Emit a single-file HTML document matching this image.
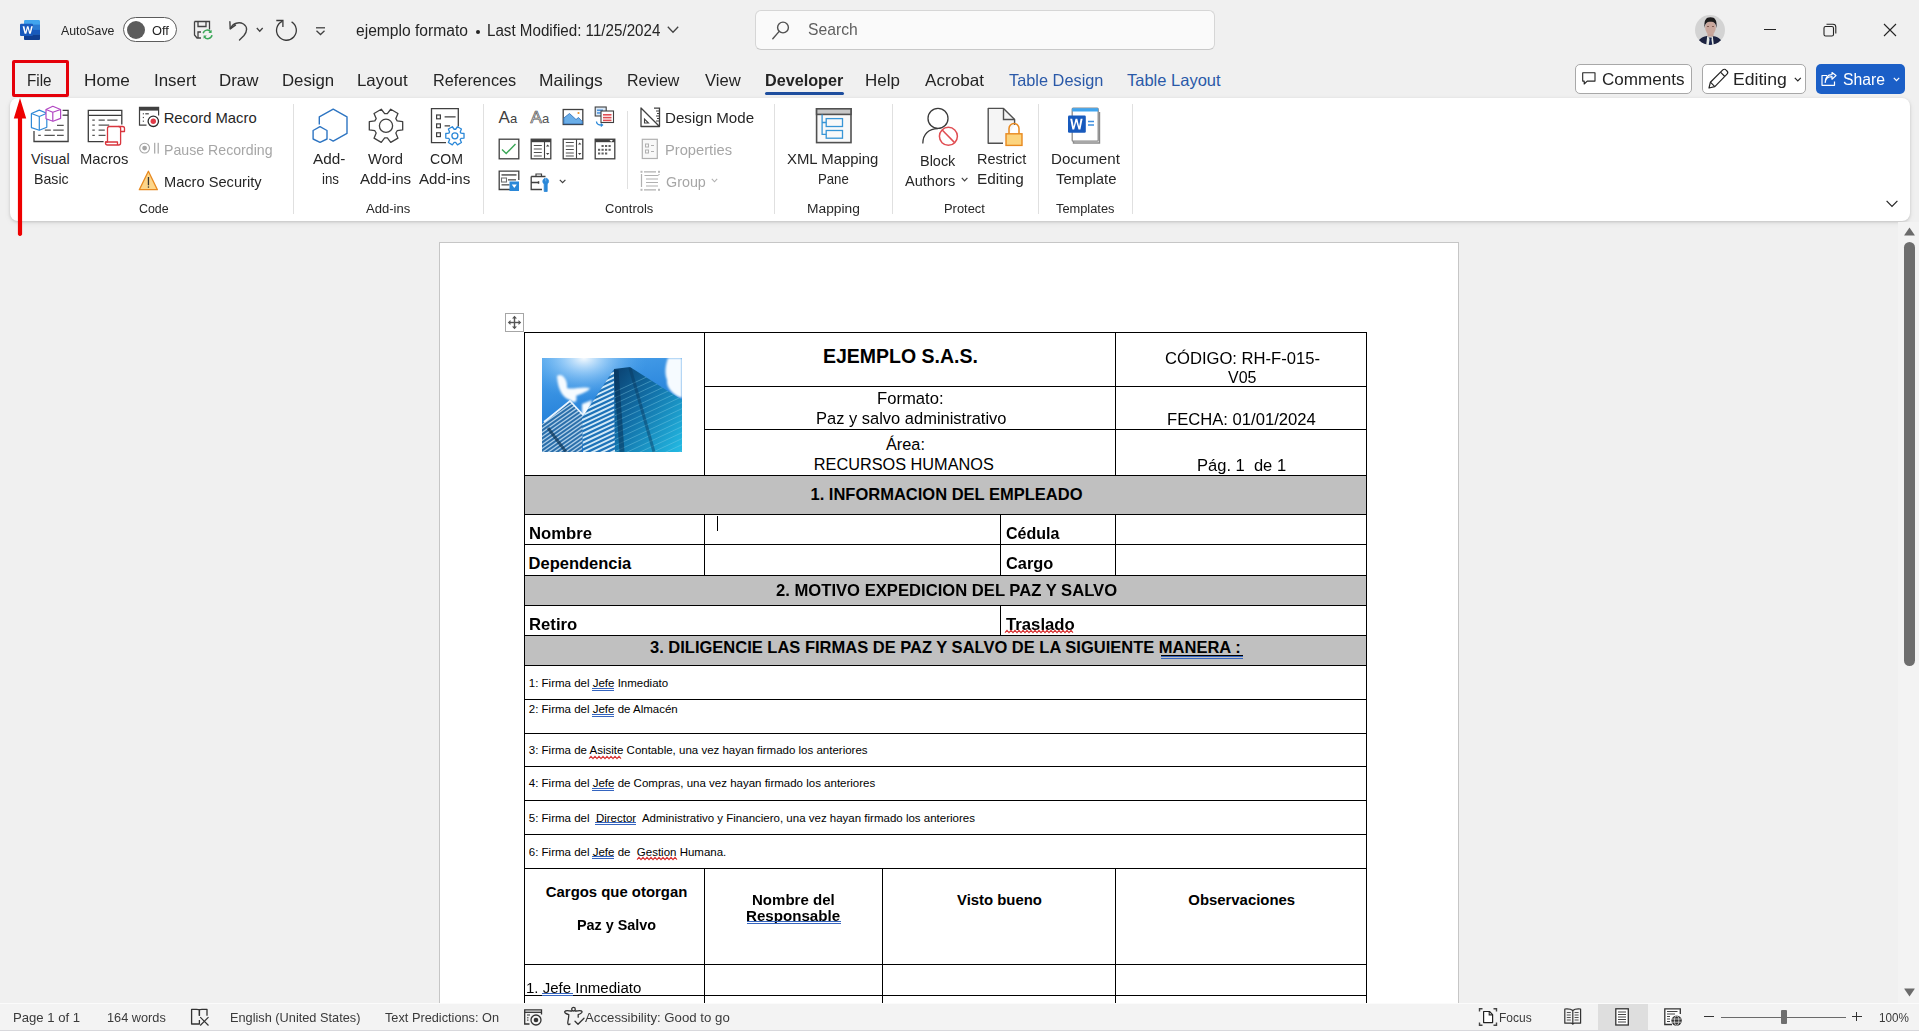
<!DOCTYPE html>
<html><head><meta charset="utf-8"><style>
html,body{margin:0;padding:0}
body{width:1919px;height:1031px;overflow:hidden;position:relative;background:#f0f0f0;font-family:"Liberation Sans",sans-serif}
.t{position:absolute;white-space:pre;line-height:1;transform-origin:0 0}
svg{overflow:visible}
</style></head><body>
<div style="position:absolute;left:10px;top:98px;width:1900px;height:123px;background:#fff;border-radius:8px;box-shadow:0 1px 3px rgba(0,0,0,0.16),0 2px 7px rgba(0,0,0,0.06)"></div>
<span class="t" style="left:61.00px;top:24.07px;font-size:13.5px;font-weight:400;color:#242424;transform:scaleX(0.9133);">AutoSave</span>
<div style="position:absolute;left:123px;top:17px;width:54px;height:25px;box-sizing:border-box;border:1px solid #5c5c5c;border-radius:13px;background:#fff"></div>
<div style="position:absolute;left:127px;top:21px;width:18px;height:18px;background:#5c5c5c;border-radius:50%"></div>
<span class="t" style="left:151.60px;top:23.82px;font-size:13.5px;font-weight:400;color:#242424;transform:scaleX(0.9524);">Off</span>
<span class="t" style="left:356.00px;top:22.75px;font-size:16px;font-weight:400;color:#242424;transform:scaleX(0.9754);">ejemplo formato</span>
<div style="position:absolute;left:476px;top:30px;width:4px;height:4px;background:#242424;border-radius:50%"></div>
<span class="t" style="left:486.55px;top:22.75px;font-size:16px;font-weight:400;color:#242424;transform:scaleX(0.9476);">Last Modified: 11/25/2024</span>
<div style="position:absolute;left:755px;top:10px;width:460px;height:40px;box-sizing:border-box;border:1px solid #d6d6d6;border-bottom-color:#c8c8c8;border-radius:6px;background:#fafafa"></div>
<span class="t" style="left:807.70px;top:20.71px;font-size:17px;font-weight:400;color:#5f5f5f;transform:scaleX(0.9231);">Search</span>
<span class="t" style="left:26.58px;top:72.33px;font-size:16.5px;font-weight:400;color:#242424;transform:scaleX(0.9248);">File</span>
<span class="t" style="left:83.66px;top:72.33px;font-size:16.5px;font-weight:400;color:#242424;transform:scaleX(1.0435);">Home</span>
<span class="t" style="left:153.58px;top:72.33px;font-size:16.5px;font-weight:400;color:#242424;transform:scaleX(1.0226);">Insert</span>
<span class="t" style="left:219.48px;top:72.33px;font-size:16.5px;font-weight:400;color:#242424;transform:scaleX(1.0243);">Draw</span>
<span class="t" style="left:281.98px;top:72.33px;font-size:16.5px;font-weight:400;color:#242424;transform:scaleX(1.0162);">Design</span>
<span class="t" style="left:356.98px;top:72.33px;font-size:16.5px;font-weight:400;color:#242424;transform:scaleX(1.0213);">Layout</span>
<span class="t" style="left:433.01px;top:72.33px;font-size:16.5px;font-weight:400;color:#242424;transform:scaleX(0.9864);">References</span>
<span class="t" style="left:538.95px;top:72.33px;font-size:16.5px;font-weight:400;color:#242424;transform:scaleX(1.0545);">Mailings</span>
<span class="t" style="left:627.33px;top:72.33px;font-size:16.5px;font-weight:400;color:#242424;transform:scaleX(0.9683);">Review</span>
<span class="t" style="left:705.00px;top:72.33px;font-size:16.5px;font-weight:400;color:#242424;transform:scaleX(1.0070);">View</span>
<span class="t" style="left:865.47px;top:72.33px;font-size:16.5px;font-weight:400;color:#242424;transform:scaleX(1.0288);">Help</span>
<span class="t" style="left:925.00px;top:72.33px;font-size:16.5px;font-weight:400;color:#242424;transform:scaleX(1.0370);">Acrobat</span>
<span class="t" style="left:764.52px;top:72.33px;font-size:16.5px;font-weight:700;color:#242424;transform:scaleX(0.9816);">Developer</span>
<div style="position:absolute;left:765px;top:92px;width:79px;height:3px;background:#1e4e9e;border-radius:2px"></div>
<span class="t" style="left:1008.75px;top:72.33px;font-size:16.5px;font-weight:400;color:#2a59a8;transform:scaleX(0.9899);">Table Design</span>
<span class="t" style="left:1127.00px;top:72.33px;font-size:16.5px;font-weight:400;color:#2a59a8;">Table Layout</span>
<div style="position:absolute;left:1575px;top:64px;width:117px;height:30px;box-sizing:border-box;border:1px solid #a8a8a8;border-radius:5px;background:#fff"></div>
<span class="t" style="left:1601.50px;top:71.95px;font-size:16px;font-weight:400;color:#242424;transform:scaleX(1.0666);">Comments</span>
<div style="position:absolute;left:1702px;top:64px;width:104px;height:30px;box-sizing:border-box;border:1px solid #a8a8a8;border-radius:5px;background:#fff"></div>
<span class="t" style="left:1732.50px;top:71.95px;font-size:16px;font-weight:400;color:#242424;transform:scaleX(1.1016);">Editing</span>
<div style="position:absolute;left:1816px;top:64px;width:89px;height:30px;background:#1b5fc7;border-radius:5px"></div>
<span class="t" style="left:1842.50px;top:71.95px;font-size:16px;font-weight:400;color:#fff;transform:scaleX(0.9837);">Share</span>
<span class="t" style="left:31.00px;top:151.79px;font-size:14.3px;font-weight:400;color:#262626;">Visual</span>
<span class="t" style="left:33.51px;top:172.19px;font-size:14.3px;font-weight:400;color:#262626;transform:scaleX(0.9908);">Basic</span>
<span class="t" style="left:80.47px;top:151.79px;font-size:14.3px;font-weight:400;color:#262626;transform:scaleX(1.0345);">Macros</span>
<span class="t" style="left:163.70px;top:110.67px;font-size:14.8px;font-weight:400;color:#262626;">Record Macro</span>
<span class="t" style="left:163.71px;top:143.09px;font-size:14.3px;font-weight:400;color:#a6a6a6;transform:scaleX(0.9896);">Pause Recording</span>
<span class="t" style="left:163.71px;top:174.67px;font-size:14.8px;font-weight:400;color:#262626;transform:scaleX(0.9881);">Macro Security</span>
<span class="t" style="left:138.70px;top:203.42px;font-size:12.5px;font-weight:400;color:#262626;transform:scaleX(0.9923);">Code</span>
<span class="t" style="left:313.40px;top:151.79px;font-size:14.3px;font-weight:400;color:#262626;transform:scaleX(1.0710);">Add-</span>
<span class="t" style="left:321.80px;top:172.19px;font-size:14.3px;font-weight:400;color:#262626;transform:scaleX(0.9323);">ins</span>
<span class="t" style="left:368.30px;top:151.79px;font-size:14.3px;font-weight:400;color:#262626;transform:scaleX(1.0310);">Word</span>
<span class="t" style="left:360.40px;top:172.19px;font-size:14.3px;font-weight:400;color:#262626;transform:scaleX(1.0553);">Add-ins</span>
<span class="t" style="left:429.50px;top:151.79px;font-size:14.3px;font-weight:400;color:#262626;transform:scaleX(0.9863);">COM</span>
<span class="t" style="left:419.30px;top:172.19px;font-size:14.3px;font-weight:400;color:#262626;transform:scaleX(1.0595);">Add-ins</span>
<span class="t" style="left:366.20px;top:203.42px;font-size:12.5px;font-weight:400;color:#262626;transform:scaleX(1.0443);">Add-ins</span>
<span class="t" style="left:664.78px;top:110.67px;font-size:14.8px;font-weight:400;color:#262626;transform:scaleX(1.0215);">Design Mode</span>
<span class="t" style="left:664.81px;top:142.67px;font-size:14.8px;font-weight:400;color:#a6a6a6;transform:scaleX(0.9933);">Properties</span>
<span class="t" style="left:665.80px;top:174.67px;font-size:14.8px;font-weight:400;color:#a6a6a6;transform:scaleX(0.9683);">Group</span>
<span class="t" style="left:604.50px;top:203.42px;font-size:12.5px;font-weight:400;color:#262626;transform:scaleX(1.0390);">Controls</span>
<span class="t" style="left:787.20px;top:151.79px;font-size:14.3px;font-weight:400;color:#262626;transform:scaleX(1.0424);">XML Mapping</span>
<span class="t" style="left:817.78px;top:172.19px;font-size:14.3px;font-weight:400;color:#262626;transform:scaleX(0.9217);">Pane</span>
<span class="t" style="left:806.50px;top:203.42px;font-size:12.5px;font-weight:400;color:#262626;transform:scaleX(1.1022);">Mapping</span>
<span class="t" style="left:919.79px;top:154.19px;font-size:14.3px;font-weight:400;color:#262626;transform:scaleX(1.0111);">Block</span>
<span class="t" style="left:905.40px;top:173.99px;font-size:14.3px;font-weight:400;color:#262626;transform:scaleX(1.0179);">Authors</span>
<span class="t" style="left:976.68px;top:151.79px;font-size:14.3px;font-weight:400;color:#262626;transform:scaleX(1.0151);">Restrict</span>
<span class="t" style="left:977.43px;top:172.19px;font-size:14.3px;font-weight:400;color:#262626;transform:scaleX(1.0710);">Editing</span>
<span class="t" style="left:944.37px;top:203.42px;font-size:12.5px;font-weight:400;color:#262626;transform:scaleX(1.0325);">Protect</span>
<span class="t" style="left:1050.84px;top:151.79px;font-size:14.3px;font-weight:400;color:#262626;transform:scaleX(1.0563);">Document</span>
<span class="t" style="left:1056.20px;top:172.19px;font-size:14.3px;font-weight:400;color:#262626;transform:scaleX(1.0420);">Template</span>
<span class="t" style="left:1056.20px;top:203.42px;font-size:12.5px;font-weight:400;color:#262626;transform:scaleX(1.0261);">Templates</span>
<div style="position:absolute;left:293px;top:104px;width:1px;height:110px;background:#e0e0e0"></div>
<div style="position:absolute;left:483px;top:104px;width:1px;height:110px;background:#e0e0e0"></div>
<div style="position:absolute;left:774px;top:104px;width:1px;height:110px;background:#e0e0e0"></div>
<div style="position:absolute;left:892px;top:104px;width:1px;height:110px;background:#e0e0e0"></div>
<div style="position:absolute;left:1038px;top:104px;width:1px;height:110px;background:#e0e0e0"></div>
<div style="position:absolute;left:1132px;top:104px;width:1px;height:110px;background:#e0e0e0"></div>
<div style="position:absolute;left:627px;top:111px;width:1px;height:78px;background:#e0e0e0"></div>
<div style="position:absolute;left:439px;top:242px;width:1020px;height:768px;box-sizing:border-box;border:1px solid #c6c6c6;border-bottom:none;background:#fff"></div>
<div style="position:absolute;left:1898px;top:222px;width:21px;height:781px;background:#f3f3f3"></div>
<div style="position:absolute;left:0px;top:1003px;width:1919px;height:28px;background:#f3f3f3;border-top:1px solid #fbfbfb;box-sizing:border-box"></div>
<div style="position:absolute;left:0px;top:1030px;width:1919px;height:1px;background:#d8d8dc"></div>
<span class="t" style="left:13.29px;top:1011.19px;font-size:13px;font-weight:400;color:#3a3a3a;transform:scaleX(1.0097);">Page 1 of 1</span>
<span class="t" style="left:107.00px;top:1011.19px;font-size:13px;font-weight:400;color:#3a3a3a;transform:scaleX(0.9805);">164 words</span>
<span class="t" style="left:230.32px;top:1011.19px;font-size:13px;font-weight:400;color:#3a3a3a;transform:scaleX(0.9808);">English (United States)</span>
<span class="t" style="left:384.90px;top:1011.19px;font-size:13px;font-weight:400;color:#3a3a3a;transform:scaleX(0.9802);">Text Predictions: On</span>
<span class="t" style="left:584.90px;top:1011.19px;font-size:13px;font-weight:400;color:#3a3a3a;transform:scaleX(1.0168);">Accessibility: Good to go</span>
<div style="position:absolute;left:1598px;top:1004px;width:50px;height:26px;background:#dedede"></div>
<span class="t" style="left:1499.08px;top:1011.19px;font-size:13px;font-weight:400;color:#3a3a3a;transform:scaleX(0.9226);">Focus</span>
<span class="t" style="left:1879.00px;top:1011.19px;font-size:13px;font-weight:400;color:#3a3a3a;transform:scaleX(0.8994);">100%</span>
<div style="position:absolute;left:524px;top:475px;width:843px;height:39px;background:#c0c0c0"></div>
<div style="position:absolute;left:524px;top:575px;width:843px;height:30px;background:#c0c0c0"></div>
<div style="position:absolute;left:524px;top:635px;width:843px;height:30px;background:#c0c0c0"></div>
<div style="position:absolute;left:524px;top:332px;width:843px;height:1px;background:#000"></div>
<div style="position:absolute;left:704px;top:386px;width:663px;height:1px;background:#000"></div>
<div style="position:absolute;left:704px;top:429px;width:663px;height:1px;background:#000"></div>
<div style="position:absolute;left:524px;top:475px;width:843px;height:1px;background:#000"></div>
<div style="position:absolute;left:524px;top:514px;width:843px;height:1px;background:#000"></div>
<div style="position:absolute;left:524px;top:544px;width:843px;height:1px;background:#000"></div>
<div style="position:absolute;left:524px;top:575px;width:843px;height:1px;background:#000"></div>
<div style="position:absolute;left:524px;top:605px;width:843px;height:1px;background:#000"></div>
<div style="position:absolute;left:524px;top:635px;width:843px;height:1px;background:#000"></div>
<div style="position:absolute;left:524px;top:665px;width:843px;height:1px;background:#000"></div>
<div style="position:absolute;left:524px;top:699px;width:843px;height:1px;background:#000"></div>
<div style="position:absolute;left:524px;top:733px;width:843px;height:1px;background:#000"></div>
<div style="position:absolute;left:524px;top:766px;width:843px;height:1px;background:#000"></div>
<div style="position:absolute;left:524px;top:800px;width:843px;height:1px;background:#000"></div>
<div style="position:absolute;left:524px;top:834px;width:843px;height:1px;background:#000"></div>
<div style="position:absolute;left:524px;top:868px;width:843px;height:1px;background:#000"></div>
<div style="position:absolute;left:524px;top:964px;width:843px;height:1px;background:#000"></div>
<div style="position:absolute;left:524px;top:995px;width:843px;height:1px;background:#000"></div>
<div style="position:absolute;left:524px;top:332px;width:1px;height:671px;background:#000"></div>
<div style="position:absolute;left:1366px;top:332px;width:1px;height:671px;background:#000"></div>
<div style="position:absolute;left:704px;top:332px;width:1px;height:143px;background:#000"></div>
<div style="position:absolute;left:1115px;top:332px;width:1px;height:143px;background:#000"></div>
<div style="position:absolute;left:704px;top:514px;width:1px;height:61px;background:#000"></div>
<div style="position:absolute;left:1000px;top:514px;width:1px;height:61px;background:#000"></div>
<div style="position:absolute;left:1115px;top:514px;width:1px;height:61px;background:#000"></div>
<div style="position:absolute;left:1000px;top:605px;width:1px;height:30px;background:#000"></div>
<div style="position:absolute;left:704px;top:868px;width:1px;height:135px;background:#000"></div>
<div style="position:absolute;left:882px;top:868px;width:1px;height:135px;background:#000"></div>
<div style="position:absolute;left:1115px;top:868px;width:1px;height:135px;background:#000"></div>
<div style="position:absolute;left:505px;top:313px;width:19px;height:19px;box-sizing:border-box;border:1px solid #a6a6a6;background:#fff"></div>
<svg style="position:absolute;left:507px;top:315px;" width="15" height="15" viewBox="0 0 15 15"><g fill="#555"><rect x="6.8" y="2.5" width="1.4" height="10"/><rect x="2.5" y="6.8" width="10" height="1.4"/><path d="M7.5 0.8 L10 3.5 L5 3.5Z M7.5 14.2 L10 11.5 L5 11.5Z M0.8 7.5 L3.5 5 L3.5 10Z M14.2 7.5 L11.5 5 L11.5 10Z"/></g></svg>
<span class="t" style="left:822.90px;top:346.79px;font-size:19.5px;font-weight:700;color:#000;">EJEMPLO S.A.S.</span>
<span class="t" style="left:877.48px;top:390.30px;font-size:16.3px;font-weight:400;color:#000;transform:scaleX(1.0217);">Formato:</span>
<span class="t" style="left:815.59px;top:410.30px;font-size:16.3px;font-weight:400;color:#000;transform:scaleX(1.0120);">Paz y salvo administrativo</span>
<span class="t" style="left:886.00px;top:436.30px;font-size:16.3px;font-weight:400;color:#000;">Área:</span>
<span class="t" style="left:813.80px;top:456.00px;font-size:16.3px;font-weight:400;color:#000;">RECURSOS HUMANOS</span>
<span class="t" style="left:1165.40px;top:350.10px;font-size:16.3px;font-weight:400;color:#000;transform:scaleX(1.0201);">CÓDIGO: RH-F-015-</span>
<span class="t" style="left:1227.80px;top:368.50px;font-size:16.3px;font-weight:400;color:#000;transform:scaleX(0.9822);">V05</span>
<span class="t" style="left:1167.18px;top:410.50px;font-size:16.3px;font-weight:400;color:#000;transform:scaleX(1.0210);">FECHA: 01/01/2024</span>
<span class="t" style="left:1196.99px;top:456.60px;font-size:16.3px;font-weight:400;color:#000;transform:scaleX(1.0144);">Pág. 1  de 1</span>
<span class="t" style="left:810.50px;top:486.33px;font-size:16.5px;font-weight:700;color:#000;">1. INFORMACION DEL EMPLEADO</span>
<span class="t" style="left:528.59px;top:525.13px;font-size:16.5px;font-weight:700;color:#000;transform:scaleX(1.0120);">Nombre</span>
<span class="t" style="left:1005.60px;top:525.23px;font-size:16.5px;font-weight:700;color:#000;transform:scaleX(0.9725);">Cédula</span>
<span class="t" style="left:528.60px;top:555.13px;font-size:16.5px;font-weight:700;color:#000;">Dependencia</span>
<span class="t" style="left:1005.60px;top:554.53px;font-size:16.5px;font-weight:700;color:#000;transform:scaleX(0.9918);">Cargo</span>
<span class="t" style="left:775.80px;top:582.33px;font-size:16.5px;font-weight:700;color:#000;transform:scaleX(1.0074);">2. MOTIVO EXPEDICION DEL PAZ Y SALVO</span>
<span class="t" style="left:528.59px;top:616.33px;font-size:16.5px;font-weight:700;color:#000;transform:scaleX(1.0130);">Retiro</span>
<span class="t" style="left:1005.60px;top:615.83px;font-size:16.5px;font-weight:700;color:#000;transform:scaleX(1.0135);">Traslado</span>
<span class="t" style="left:650.00px;top:639.43px;font-size:16.5px;font-weight:700;color:#000;">3. DILIGENCIE LAS FIRMAS DE PAZ Y SALVO DE LA SIGUIENTE MANERA :</span>
<div style="position:absolute;left:717px;top:516px;width:1px;height:15px;background:#000"></div>
<span class="t" style="left:528.80px;top:677.96px;font-size:11.5px;font-weight:400;color:#000;">1: Firma del Jefe Inmediato</span>
<span class="t" style="left:528.80px;top:703.96px;font-size:11.5px;font-weight:400;color:#000;">2: Firma del Jefe de Almacén</span>
<span class="t" style="left:528.80px;top:745.36px;font-size:11.5px;font-weight:400;color:#000;">3: Firma de Asisite Contable, una vez hayan firmado los anteriores</span>
<span class="t" style="left:528.80px;top:778.36px;font-size:11.5px;font-weight:400;color:#000;">4: Firma del Jefe de Compras, una vez hayan firmado los anteriores</span>
<span class="t" style="left:528.80px;top:812.56px;font-size:11.5px;font-weight:400;color:#000;">5: Firma del  Director  Administrativo y Financiero, una vez hayan firmado los anteriores</span>
<span class="t" style="left:528.80px;top:846.56px;font-size:11.5px;font-weight:400;color:#000;">6: Firma del Jefe de  Gestion Humana.</span>
<span class="t" style="left:545.80px;top:884.78px;font-size:14.9px;font-weight:700;color:#000;">Cargos que otorgan</span>
<span class="t" style="left:576.73px;top:917.78px;font-size:14.9px;font-weight:700;color:#000;transform:scaleX(0.9660);">Paz y Salvo</span>
<span class="t" style="left:752.09px;top:892.58px;font-size:14.9px;font-weight:700;color:#000;transform:scaleX(1.0102);">Nombre del</span>
<span class="t" style="left:746.48px;top:908.68px;font-size:14.9px;font-weight:700;color:#000;transform:scaleX(1.0153);">Responsable</span>
<span class="t" style="left:957.00px;top:892.88px;font-size:14.9px;font-weight:700;color:#000;">Visto bueno</span>
<span class="t" style="left:1188.30px;top:892.88px;font-size:14.9px;font-weight:700;color:#000;">Observaciones</span>
<span class="t" style="left:525.79px;top:980.53px;font-size:14.85px;font-weight:400;color:#000;transform:scaleX(1.0123);">1. Jefe Inmediato</span>
<svg style="position:absolute;left:20px;top:20px;" width="20" height="20" viewBox="0 0 20 20"><rect x="4" y="0" width="16" height="20" rx="1.2" fill="#41a5ee"/><rect x="4" y="4.6" width="16" height="5" fill="#2b7cd3"/><rect x="4" y="9.6" width="16" height="5" fill="#185abd"/><path d="M4 14.6h16v4.2a1.2 1.2 0 0 1-1.2 1.2H5.2A1.2 1.2 0 0 1 4 18.8z" fill="#103f91"/><rect x="0" y="3.7" width="13" height="12.2" rx="1" fill="#185abd"/><path d="M2.6 6.2h1.8l1.2 5.6 1.4-5.6h1.5l1.4 5.6 1.2-5.6h1.7l-2 7.6H9.2L7.75 8.3 6.3 13.8H4.6z" fill="#fff"/></svg>
<svg style="position:absolute;left:193px;top:20px;" width="21" height="20" viewBox="0 0 21 20"><g fill="none" stroke="#424242" stroke-width="1.3"><path d="M1.5 1.5h15v8M1.5 1.5v13.5l2.5 3h4"/><path d="M5 1.5v5h8v-5M5 18v-6h3"/></g><g fill="none" stroke="#3aa757" stroke-width="1.5"><path d="M10.2 13.2a4.2 4.2 0 0 1 7.6-1.2"/><path d="M19 15.2a4.2 4.2 0 0 1-7.6 1.6"/></g><path d="M18.6 9.8v3.2h-3.2z M10.6 18.8v-3.2h3.2z" fill="#3aa757"/></svg>
<svg style="position:absolute;left:229px;top:20px;" width="20" height="21" viewBox="0 0 20 21"><g fill="none" stroke="#424242" stroke-width="1.4" stroke-linecap="round"><path d="M1.2 8.8 L6.5 5.2 M1.2 8.8 L0.9 1.8"/><path d="M1.5 8.6 C4 3 10 1.5 14.5 4 C19 7 18 12 15 15.5 L10.5 20"/></g></svg>
<svg style="position:absolute;left:256px;top:27px;" width="8" height="6" viewBox="0 0 8 6"><path d="M0.8 1 L3.75 4.2 L6.7 1" fill="none" stroke="#424242" stroke-width="1.3"/></svg>
<svg style="position:absolute;left:272px;top:16px;" width="28" height="28" viewBox="0 0 28 28"><g fill="none" stroke="#383838" stroke-width="1.3"><path d="M19.6 5.9 A9.9 9.9 0 1 1 10.2 5.4"/><path d="M4.3 4.5 H10.9 V11.1"/></g></svg>
<svg style="position:absolute;left:315px;top:27px;" width="11" height="9" viewBox="0 0 11 9"><g fill="none" stroke="#424242" stroke-width="1.3"><path d="M1 0.8h9"/><path d="M1.5 3.8 L5.5 7.5 L9.5 3.8"/></g></svg>
<svg style="position:absolute;left:667px;top:26px;" width="12" height="8" viewBox="0 0 12 8"><path d="M0.8 0.8 L6 6.2 L11.2 0.8" fill="none" stroke="#424242" stroke-width="1.3"/></svg>
<svg style="position:absolute;left:772px;top:21px;" width="18" height="19" viewBox="0 0 18 19"><g fill="none" stroke="#505050" stroke-width="1.4"><circle cx="11" cy="6.5" r="5.4"/><path d="M7.2 10.4 L0.8 17.8" stroke-linecap="round"/></g></svg>
<svg style="position:absolute;left:1695px;top:15px;" width="30" height="30" viewBox="0 0 30 30"><defs><clipPath id="av"><circle cx="15" cy="15" r="15"/></clipPath><filter id="avb"><feGaussianBlur stdDeviation="0.5"/></filter></defs><g clip-path="url(#av)"><rect width="30" height="30" fill="#d3d3d3"/><g filter="url(#avb)"><path d="M2.5 30 C3 25 5 22.5 12 21 L15 23 L18 21 C25 22.5 27 25 27.5 30Z" fill="#1a2140"/><path d="M12.2 21 L15 23.5 L17.8 21 L18.8 30 L11.2 30Z" fill="#e4e8e4"/><path d="M14.2 22.8h2.6l-0.3 2 0.8 5.2h-3.6l0.8-5.2z" fill="#1d2850"/><rect x="12.5" y="17.5" width="6" height="4" fill="#c4a095"/><ellipse cx="15.5" cy="12.8" rx="5.3" ry="7" fill="#c9a79c"/><path d="M9.6 13 C8.8 5 11 2.2 15.5 2.2 C20 2.2 22.2 5 21.5 13 C20.8 8.5 19.5 6.8 15.5 6.8 C11.5 6.8 10.2 8.5 9.6 13Z" fill="#1c1a1c"/><rect x="12" y="11.2" width="2" height="0.8" fill="#6e4a40"/><rect x="17" y="11.2" width="2" height="0.8" fill="#6e4a40"/></g></g></svg>
<div style="position:absolute;left:1764px;top:29px;width:12px;height:1px;background:#242424"></div>
<svg style="position:absolute;left:1823px;top:23px;" width="14" height="14" viewBox="0 0 14 14"><g fill="none" stroke="#242424" stroke-width="1.1"><rect x="1" y="3.5" width="9.5" height="9.5" rx="1.6"/><path d="M3.5 1.2h6.5a2.8 2.8 0 0 1 2.8 2.8v6.5"/></g></svg>
<svg style="position:absolute;left:1883px;top:23px;" width="14" height="14" viewBox="0 0 14 14"><path d="M1 1 L13 13 M13 1 L1 13" stroke="#242424" stroke-width="1.1"/></svg>
<svg style="position:absolute;left:1582px;top:72px;" width="14" height="13" viewBox="0 0 14 13"><path d="M0.7 0.7h12.3v8.4H5.2L2.2 12V9.1H0.7z" fill="none" stroke="#242424" stroke-width="1.1" stroke-linejoin="round"/></svg>
<svg style="position:absolute;left:1708px;top:69px;" width="21" height="20" viewBox="0 0 21 20"><g fill="none" stroke="#242424" stroke-width="1.2" stroke-linejoin="round"><path d="M1 19 L2.4 13.2 L14.8 0.9 a2.2 2.2 0 0 1 3.3 0.2 l0.9 0.9 a2.2 2.2 0 0 1 0 3.1 L6.8 17.6 Z"/><path d="M12.5 3.2 L16.8 7.5 M2.4 13.2 L6.8 17.6"/></g></svg>
<svg style="position:absolute;left:1794px;top:77px;" width="8" height="5" viewBox="0 0 8 5"><path d="M0.8 0.8 L3.8 3.8 L6.8 0.8" fill="none" stroke="#242424" stroke-width="1.2"/></svg>
<svg style="position:absolute;left:1821px;top:72px;" width="16" height="14" viewBox="0 0 16 14"><g fill="none" stroke="#fff" stroke-width="1.2" stroke-linejoin="round"><path d="M6 3.5H1v9.8h12.5V9.5"/><path d="M4.2 10.5 C4.5 6.5 7.5 4.6 11 4.6 V7.2 L15 3.6 L11 0.6 V2.6 C6.5 2.6 4 6 4.2 10.5Z"/></g></svg>
<svg style="position:absolute;left:1893px;top:77px;" width="8" height="5" viewBox="0 0 8 5"><path d="M0.8 0.8 L3.5 3.6 L6.2 0.8" fill="none" stroke="#fff" stroke-width="1.2"/></svg>
<svg style="position:absolute;left:1886px;top:200px;" width="12" height="8" viewBox="0 0 12 8"><path d="M0.6 0.8 L6 6.4 L11.4 0.8" fill="none" stroke="#242424" stroke-width="1.2"/></svg>
<div style="position:absolute;left:12px;top:60px;width:57px;height:37px;box-sizing:border-box;border:3.5px solid #e5000a;border-radius:2px"></div>
<svg style="position:absolute;left:13px;top:98px;" width="14" height="140" viewBox="0 0 14 140"><path d="M7 0 L13.2 20.5 L9.1 20.5 L9.1 136.5 Q7 139.5 4.9 136.5 L4.9 20.5 L0.8 20.5 Z" fill="#ee0000"/></svg>
<svg style="position:absolute;left:1904px;top:227px;" width="11" height="9" viewBox="0 0 11 9"><path d="M5.5 0.5 L10.8 8.2 Q10.8 8.6 10.3 8.6 H0.7 Q0.2 8.6 0.2 8.2Z" fill="#6b6b6b"/></svg>
<div style="position:absolute;left:1904px;top:242px;width:11px;height:424px;background:#6e6e6e;border-radius:6px"></div>
<svg style="position:absolute;left:1904px;top:988px;" width="11" height="9" viewBox="0 0 11 9"><path d="M5.5 8.5 L10.8 0.8 Q10.8 0.4 10.3 0.4 H0.7 Q0.2 0.4 0.2 0.8Z" fill="#6b6b6b"/></svg>
<svg style="position:absolute;left:28px;top:102px;" width="44" height="44" viewBox="0 0 44 44"><g fill="none" stroke="#404040" stroke-width="1.3"><path d="M34.6 8.3H40.1V39.5H6V29"/><path d="M34.6 13.2H40"/></g><g stroke="#555" stroke-width="1.2"><path d="M29 23.3h6.7M16.8 28.2h6M25.2 28.2h10.5M10.2 33.3h2.6M16.4 33.3h10.4M29 33.3h6.7"/></g><g fill="#fff" stroke="#2f8ad8" stroke-width="1.2" stroke-linejoin="round"><path d="M11.3 8.1L18.8 11.3V25.2L11.3 28.2L3.4 25.6V11.5Z"/><path d="M3.4 11.5L11.3 14.5L18.8 11.3M11.3 14.5V28.2" fill="none"/></g><g fill="#fff" stroke="#b146c2" stroke-width="1.2" stroke-linejoin="round"><path d="M24.8 4.3L32.6 7.5V16.4L25 19.2L18 16.8V7.5Z"/><path d="M18 7.5L24.8 10.2L32.6 7.5M24.8 10.2V19.2" fill="none"/></g></svg>
<svg style="position:absolute;left:84px;top:104px;" width="44" height="44" viewBox="0 0 44 44"><g fill="none" stroke="#3c3c3c" stroke-width="1.3"><path d="M19.6 37.6H4.3V6.4H37.8V20.5"/><path d="M4.3 11.3H37.8"/></g><g stroke="#555" stroke-width="1.2"><path d="M8.3 16.2h2.5M14.6 16.2h6.2M23.3 16.2h10.2M8.3 21.2h2.5M14.6 21.2h10.6M8.3 26.2h2.5M14.6 26.2h6.2M8.3 31.4h2.5M14.6 31.4h6.9"/></g><g fill="#fff" stroke="#d9363e" stroke-width="1.3" stroke-linejoin="round"><path d="M23.5 38V24.5a2 2 0 0 1 2-2H38.5a2 2 0 0 1 2 2v3H36.6V39a2 2 0 0 1-2 2H23.5a2 2 0 0 1-2-2V38Z"/><path d="M36.6 27.5V24.5a2 2 0 0 0-2-2M21.5 38H33.5V41" fill="none"/></g></svg>
<svg style="position:absolute;left:136px;top:104px;" width="26" height="26" viewBox="0 0 26 26"><g fill="none" stroke="#404040" stroke-width="1.2"><path d="M10.5 21.2H3.5V3.4H22.6V11.4"/></g><rect x="3.5" y="3.4" width="19.1" height="3.2" fill="#404040"/><g fill="#404040"><rect x="6.8" y="9.2" width="1.1" height="1.2"/><rect x="9.3" y="9.2" width="3.5" height="1.2"/><rect x="6.8" y="12.9" width="1.1" height="1.2"/><rect x="6.8" y="16.6" width="1.1" height="1.2"/></g><circle cx="17.3" cy="17.3" r="5.2" fill="#fff" stroke="#2a2a2a" stroke-width="1.3"/><circle cx="17.3" cy="17.3" r="2.7" fill="#e03a47"/></svg>
<svg style="position:absolute;left:136px;top:140px;" width="26" height="18" viewBox="0 0 26 18"><circle cx="8.6" cy="8.1" r="4.9" fill="none" stroke="#a6a6a6" stroke-width="1.1"/><circle cx="8.6" cy="8.1" r="2.4" fill="#a6a6a6"/><rect x="18.1" y="2.8" width="1.2" height="10.8" fill="#a6a6a6"/><rect x="21.6" y="2.8" width="1.2" height="10.8" fill="#a6a6a6"/></svg>
<svg style="position:absolute;left:136px;top:170px;" width="26" height="22" viewBox="0 0 26 22"><path d="M12.4 1.3L21.4 19.7H3.3Z" fill="#fdd68a" stroke="#e8891f" stroke-width="1.3" stroke-linejoin="round"/><rect x="11.8" y="7" width="1.3" height="8.3" fill="#333"/><rect x="11.8" y="16.4" width="1.3" height="1.3" fill="#333"/></svg>
<svg style="position:absolute;left:308px;top:104px;" width="44" height="44" viewBox="0 0 44 44"><g fill="none" stroke="#2e75c2" stroke-width="1.4" stroke-linejoin="round"><path d="M11.3 20.5V12.8L25.2 5.1L39 12.8V29.4L25.2 37.1L21.3 35"/><path d="M12 22.6L19 26.5V35L12 38.4L5.1 35V26.5Z"/></g></svg>
<svg style="position:absolute;left:366px;top:107px;" width="40" height="40" viewBox="0 0 40 40"><path d="M31.17 13.88 L36.69 14.63 L36.69 22.97 L31.17 23.72 L29.84 26.01 L31.96 31.16 L24.73 35.34 L21.33 30.93 L18.67 30.93 L15.27 35.34 L8.04 31.16 L10.16 26.01 L8.83 23.72 L3.31 22.97 L3.31 14.63 L8.83 13.88 L10.16 11.59 L8.04 6.44 L15.27 2.26 L18.67 6.67 L21.33 6.67 L24.73 2.26 L31.96 6.44 L29.84 11.59Z" fill="#fff" stroke="#404040" stroke-width="1.3" stroke-linejoin="round"/><circle cx="20" cy="18.8" r="6.6" fill="none" stroke="#404040" stroke-width="1.3"/></svg>
<svg style="position:absolute;left:430px;top:107px;" width="38" height="40" viewBox="0 0 38 40"><g fill="none" stroke="#404040" stroke-width="1.3"><path d="M16 35.6H1.5V1.6H28.3V19.5"/></g><g fill="none" stroke="#404040" stroke-width="1.2"><rect x="6.6" y="8" width="3.8" height="3.8"/><rect x="6.6" y="16.9" width="3.8" height="3.8"/><rect x="6.6" y="25.8" width="3.8" height="3.8"/></g><g stroke="#404040" stroke-width="1.2"><path d="M14.6 9.9h11M14.6 18.8h5.5"/></g><path d="M30.94 26.14 L34.02 26.52 L34.02 31.08 L30.94 31.46 L30.22 32.70 L31.43 35.56 L27.48 37.84 L25.62 35.36 L24.18 35.36 L22.32 37.84 L18.37 35.56 L19.58 32.70 L18.86 31.46 L15.78 31.08 L15.78 26.52 L18.86 26.14 L19.58 24.90 L18.37 22.04 L22.32 19.76 L24.18 22.24 L25.62 22.24 L27.48 19.76 L31.43 22.04 L30.22 24.90Z" fill="#fff" stroke="#2b88d8" stroke-width="1.3" stroke-linejoin="round"/><circle cx="24.9" cy="28.8" r="3.0" fill="none" stroke="#2b88d8" stroke-width="1.3"/></svg>
<svg style="position:absolute;left:498px;top:109px;" width="22" height="16" viewBox="0 0 22 16"><text x="0.5" y="14" font-family="Liberation Sans" font-size="17" fill="#404040">A</text><text x="12" y="14" font-family="Liberation Sans" font-size="13" fill="#404040">a</text></svg>
<svg style="position:absolute;left:530px;top:109px;" width="22" height="16" viewBox="0 0 22 16"><text x="0.5" y="14" font-family="Liberation Sans" font-size="17" fill="#fff" stroke="#505050" stroke-width="0.7">A</text><text x="12" y="14" font-family="Liberation Sans" font-size="13" fill="#505050">a</text></svg>
<svg style="position:absolute;left:562px;top:108px;" width="22" height="18" viewBox="0 0 22 18"><rect x="1.2" y="1.5" width="19.6" height="15" fill="#fff" stroke="#404040" stroke-width="1.3"/><path d="M1.8 15.8V10L7.5 5.5L14 11.5L16.5 9.5L20.3 13.5V15.8Z" fill="#6aaee8" stroke="#2b6cb8" stroke-width="0.8"/><circle cx="16.5" cy="5" r="1.1" fill="#e8912d"/></svg>
<svg style="position:absolute;left:594px;top:106px;" width="22" height="22" viewBox="0 0 22 22"><rect x="1.2" y="1" width="11" height="9" fill="#dbe9f7" stroke="#404040" stroke-width="1.1"/><rect x="3" y="3.5" width="6" height="1.5" fill="#4a90d9"/><rect x="3" y="6.2" width="4" height="1.5" fill="#4a90d9"/><rect x="7" y="5" width="12.5" height="11.5" fill="#fff" stroke="#404040" stroke-width="1.1"/><rect x="9" y="8" width="8.5" height="1.6" fill="#e04d52"/><rect x="9" y="10.8" width="8.5" height="1.6" fill="#e04d52"/><rect x="9" y="13.6" width="8.5" height="1.6" fill="#e04d52"/><path d="M2.5 15.5C2.5 18 4 19 7.5 19" fill="none" stroke="#2b88d8" stroke-width="1.3"/><path d="M6.8 16.8L9.5 19L6.8 21.2Z" fill="#2b88d8"/></svg>
<svg style="position:absolute;left:498px;top:138px;" width="22" height="22" viewBox="0 0 22 22"><rect x="1.2" y="1.2" width="19.6" height="19.6" fill="#fff" stroke="#404040" stroke-width="1.3"/><path d="M4 11.5L8.2 15.5L17.5 6" fill="none" stroke="#3aa757" stroke-width="1.4"/></svg>
<svg style="position:absolute;left:530px;top:138px;" width="22" height="22" viewBox="0 0 22 22"><rect x="1.2" y="1.2" width="19.6" height="19.6" fill="#fff" stroke="#404040" stroke-width="1.3"/><rect x="1.2" y="1.2" width="19.6" height="3" fill="#404040"/><path d="M14.5 1.5V20.5" stroke="#404040" stroke-width="1.1"/><g stroke="#505050" stroke-width="1.2"><path d="M3.8 7.5h8M3.8 11h8M3.8 14.5h8M3.8 18h8"/></g><path d="M16 8.5L17.7 6.5L19.4 8.5ZM16 15L17.7 17L19.4 15Z" fill="#404040"/></svg>
<svg style="position:absolute;left:562px;top:138px;" width="22" height="22" viewBox="0 0 22 22"><rect x="1.2" y="1.2" width="19.6" height="19.6" fill="#fff" stroke="#404040" stroke-width="1.3"/><path d="M14.5 1.5V20.5" stroke="#404040" stroke-width="1.1"/><g stroke="#505050" stroke-width="1.2"><path d="M3.8 4.5h8M3.8 8h8M3.8 11.5h8M3.8 15h8M3.8 18h8"/></g><path d="M16 6.5L17.7 4.5L19.4 6.5ZM16 15L17.7 17L19.4 15Z" fill="#404040"/></svg>
<svg style="position:absolute;left:594px;top:138px;" width="22" height="22" viewBox="0 0 22 22"><rect x="1.2" y="1.2" width="19.6" height="19.6" fill="#fff" stroke="#404040" stroke-width="1.3"/><rect x="1.2" y="1.2" width="19.6" height="3" fill="#404040"/><g fill="#606060"><rect x="7.5" y="7" width="2.2" height="2"/><rect x="11" y="7" width="2.2" height="2"/><rect x="14.5" y="7" width="2.2" height="2"/><rect x="4" y="10.8" width="2.2" height="2"/><rect x="7.5" y="10.8" width="2.2" height="2"/><rect x="11" y="10.8" width="2.2" height="2"/><rect x="14.5" y="10.8" width="2.2" height="2"/><rect x="4" y="14.5" width="2.2" height="2"/><rect x="7.5" y="14.5" width="2.2" height="2"/><rect x="11" y="14.5" width="2.2" height="2"/></g><path d="M15.5 2L17.2 4L18.9 2Z" fill="#fff"/></svg>
<svg style="position:absolute;left:498px;top:170px;" width="22" height="22" viewBox="0 0 22 22"><path d="M14 19.5H1.2V1.2H20.8V10" fill="#fff" stroke="#404040" stroke-width="1.3"/><rect x="3.5" y="4" width="15" height="1.8" fill="#707070"/><rect x="3.5" y="8" width="5" height="4" fill="none" stroke="#707070" stroke-width="1.1"/><rect x="10" y="9" width="8" height="1.6" fill="#707070"/><rect x="3.5" y="14" width="8" height="1.6" fill="#707070"/><rect x="11.5" y="11.5" width="9.5" height="9.5" fill="#2b88d8"/><path d="M13.8 14.5h5L16.3 18Z" fill="#fff"/></svg>
<svg style="position:absolute;left:530px;top:170px;" width="22" height="22" viewBox="0 0 22 22"><path d="M1.2 6.5H15.5M1.2 6.5V19.5H12M1.2 12.5H9" fill="none" stroke="#404040" stroke-width="1.3"/><path d="M6 6.5V4H11.5V6.5" fill="none" stroke="#404040" stroke-width="1.2"/><rect x="7.8" y="11.3" width="1.5" height="2.4" fill="#404040"/><path d="M15.2 8.2C12.5 9 12 12.5 14.2 14V21.5H17.2V14C19.4 12.5 19 9 16.2 8.2V11.5H15.2Z" fill="#2b88d8" stroke="#2b88d8" stroke-width="0.8"/></svg>
<svg style="position:absolute;left:559px;top:179px;" width="8" height="5" viewBox="0 0 8 5"><path d="M0.8 0.8L3.6 3.6L6.4 0.8" fill="none" stroke="#404040" stroke-width="1.2"/></svg>
<svg style="position:absolute;left:640px;top:107px;" width="21" height="21" viewBox="0 0 21 21"><path d="M1 1V19.5H19.5Z" fill="#fff" stroke="#404040" stroke-width="1.3" stroke-linejoin="round"/><path d="M4.5 12V16H8.5Z" fill="none" stroke="#404040" stroke-width="1.1"/><path d="M14 1.2H19.5V19" fill="none" stroke="#404040" stroke-width="1.3"/><g stroke="#404040" stroke-width="1"><path d="M16 4h3M17 6.5h2M16 9h3M17 11.5h2M16 14h3"/></g></svg>
<svg style="position:absolute;left:641px;top:138px;" width="18" height="22" viewBox="0 0 18 22"><rect x="1.3" y="1.3" width="15" height="19.2" fill="#f8f8f8" stroke="#b0b0b0" stroke-width="1.2"/><rect x="4.5" y="6" width="3" height="3" fill="none" stroke="#b0b0b0"/><rect x="4.5" y="12" width="3" height="3" fill="none" stroke="#b0b0b0"/><path d="M10 7.5h3M10 13.5h3" stroke="#b0b0b0" stroke-width="1.1"/></svg>
<svg style="position:absolute;left:640px;top:170px;" width="21" height="22" viewBox="0 0 21 22"><g fill="#b8b8b8"><rect x="0.5" y="0.8" width="2" height="2"/><rect x="18" y="0.8" width="2" height="2"/><rect x="0.5" y="18.8" width="2" height="2"/><rect x="18" y="18.8" width="2" height="2"/></g><g stroke="#b0b0b0" stroke-width="1.2"><path d="M4 1.8h12M1.5 4v13M4 19.8h12M4.5 5.5h14M6 9h12M6 12.5h12M6 16h12M19 4v1"/></g></svg>
<svg style="position:absolute;left:711px;top:178px;" width="8" height="6" viewBox="0 0 8 6"><path d="M0.8 0.8L3.5 3.8L6.2 0.8" fill="none" stroke="#b0b0b0" stroke-width="1.1"/></svg>
<svg style="position:absolute;left:815px;top:107px;" width="38" height="38" viewBox="0 0 38 38"><rect x="1.6" y="1.8" width="34.4" height="33.8" fill="#f9f9f9" stroke="#505050" stroke-width="1.6"/><rect x="1.6" y="1.8" width="34.4" height="5.6" fill="#c8c8c8" stroke="#505050" stroke-width="1.6"/><g fill="none" stroke="#3795d6" stroke-width="1.3"><path d="M7.1 7.6V27.3H11.2M7.1 15.5H11.2"/><rect x="11.2" y="11.6" width="16.3" height="7.9"/><rect x="11.2" y="23.5" width="16.3" height="7.7"/></g></svg>
<svg style="position:absolute;left:921px;top:107px;" width="40" height="40" viewBox="0 0 40 40"><g fill="none" stroke="#3a3a3a" stroke-width="1.3"><circle cx="17" cy="11.4" r="10"/><path d="M1.8 36.6C1.8 27 8 21.6 17 21.6"/></g><circle cx="27.4" cy="29.3" r="9" fill="#fff" stroke="#e04d52" stroke-width="1.5"/><path d="M21.2 23L33.6 35.6" stroke="#e04d52" stroke-width="1.5"/></svg>
<svg style="position:absolute;left:961px;top:177px;" width="8" height="6" viewBox="0 0 8 6"><path d="M0.8 0.8L3.6 3.8L6.4 0.8" fill="none" stroke="#404040" stroke-width="1.2"/></svg>
<svg style="position:absolute;left:987px;top:107px;" width="38" height="40" viewBox="0 0 38 40"><path d="M16 36.3H1.2V1.4H16.5L27.6 12.5V18" fill="#f5f5f5" stroke="#505050" stroke-width="1.4" stroke-linejoin="round"/><path d="M16.5 1.4V12.5H27.6" fill="none" stroke="#505050" stroke-width="1.4"/><path d="M22 26.8V21.5a5 5 0 0 1 10 0v5.3" fill="none" stroke="#e8891f" stroke-width="1.5"/><rect x="19" y="26.8" width="16" height="11.6" fill="#fcd47e" stroke="#e8891f" stroke-width="1.4"/></svg>
<svg style="position:absolute;left:1067px;top:107px;" width="36" height="38" viewBox="0 0 36 38"><path d="M6.5 5V36H32.5V5" fill="#fff" stroke="#8a8a8a" stroke-width="1.4"/><rect x="5.2" y="1.2" width="26" height="33" rx="1" fill="#fff" stroke="#8a8a8a" stroke-width="1.3"/><path d="M5.2 1.2H31.2V4.5H5.2Z" fill="#41a5ee"/><rect x="1" y="8.6" width="17.8" height="17.2" rx="1.2" fill="#185abd"/><path d="M3.2 11.8h2l1.5 7.6 1.8-7.6h1.8l1.8 7.6 1.5-7.6h2L13.4 22.5H11.5L9.3 14.8 7.2 22.5H5.4Z" fill="#fff"/><g stroke="#3d8fe0" stroke-width="1.5"><path d="M21 14.5h6M21 18h6"/></g></svg>
<svg style="position:absolute;left:542px;top:358px;" width="140" height="94" viewBox="0 0 140 94"><defs><linearGradient id="skyl" x1="0" y1="0" x2="0.3" y2="1"><stop offset="0" stop-color="#4ea4ec"/><stop offset="1" stop-color="#0f6fd0"/></linearGradient><radialGradient id="sun" cx="0.3" cy="0" r="0.45"><stop offset="0" stop-color="#ffffff" stop-opacity="0.95"/><stop offset="0.35" stop-color="#bfe2ff" stop-opacity="0.6"/><stop offset="1" stop-color="#4ea4ec" stop-opacity="0"/></radialGradient><linearGradient id="rf" x1="0" y1="0" x2="1" y2="0.9"><stop offset="0" stop-color="#0a3f6e"/><stop offset="0.45" stop-color="#1270a8"/><stop offset="1" stop-color="#22b6e0"/></linearGradient><filter id="bl" x="-0.2" y="-0.2" width="1.4" height="1.4"><feGaussianBlur stdDeviation="1.1"/></filter><clipPath id="lfc"><path d="M72 11 L40 60 L41 94 L73 94Z"/></clipPath><clipPath id="rfc"><path d="M72 11 L88 9 L140 42 L140 94 L73 94Z"/></clipPath><clipPath id="lbc"><path d="M0 66 L28 43 L42 58 L40 94 L0 94Z"/></clipPath><clipPath id="imc"><rect width="140" height="94"/></clipPath></defs><g clip-path="url(#imc)"><rect width="140" height="94" fill="url(#skyl)"/><rect width="140" height="94" fill="url(#sun)"/><g fill="#f6fbff" filter="url(#bl)"><path d="M15 18 C20 14 26 22 25 30 C30 32 40 28 48 30 C46 34 38 36 34 38 C36 44 32 46 28 42 C22 40 16 34 15 18Z"/><path d="M126 0 L140 0 L140 40 C132 38 124 30 125 22 C122 14 124 6 126 0Z"/><path d="M40 46 L50 42 L46 58 L40 58Z"/></g><path d="M0 66 L28 43 L42 58 L40 94 L0 94Z" fill="#2a6eaa"/><g clip-path="url(#lbc)"><path d="M-5 66 L45 31" stroke="#cfe6f7" stroke-width="1.3" opacity="0.8"/><path d="M-5 70 L45 35" stroke="#cfe6f7" stroke-width="1.3" opacity="0.8"/><path d="M-5 74 L45 39" stroke="#cfe6f7" stroke-width="1.3" opacity="0.8"/><path d="M-5 78 L45 43" stroke="#cfe6f7" stroke-width="1.3" opacity="0.8"/><path d="M-5 82 L45 47" stroke="#cfe6f7" stroke-width="1.3" opacity="0.8"/><path d="M-5 86 L45 51" stroke="#cfe6f7" stroke-width="1.3" opacity="0.8"/><path d="M-5 90 L45 55" stroke="#cfe6f7" stroke-width="1.3" opacity="0.8"/><path d="M-5 94 L45 59" stroke="#cfe6f7" stroke-width="1.3" opacity="0.8"/><path d="M-5 98 L45 63" stroke="#cfe6f7" stroke-width="1.3" opacity="0.8"/><path d="M-5 102 L45 67" stroke="#cfe6f7" stroke-width="1.3" opacity="0.8"/><path d="M-5 106 L45 71" stroke="#cfe6f7" stroke-width="1.3" opacity="0.8"/><path d="M-5 110 L45 75" stroke="#cfe6f7" stroke-width="1.3" opacity="0.8"/><path d="M-5 114 L45 79" stroke="#cfe6f7" stroke-width="1.3" opacity="0.8"/><path d="M-5 118 L45 83" stroke="#cfe6f7" stroke-width="1.3" opacity="0.8"/><path d="M-5 122 L45 87" stroke="#cfe6f7" stroke-width="1.3" opacity="0.8"/><path d="M-5 126 L45 91" stroke="#cfe6f7" stroke-width="1.3" opacity="0.8"/><path d="M-5 130 L45 95" stroke="#cfe6f7" stroke-width="1.3" opacity="0.8"/><path d="M-5 134 L45 99" stroke="#cfe6f7" stroke-width="1.3" opacity="0.8"/><path d="M-5 138 L45 103" stroke="#cfe6f7" stroke-width="1.3" opacity="0.8"/><path d="M-5 142 L45 107" stroke="#cfe6f7" stroke-width="1.3" opacity="0.8"/><path d="M-5 146 L45 111" stroke="#cfe6f7" stroke-width="1.3" opacity="0.8"/><path d="M6 70 L24 94" stroke="#0c3558" stroke-width="3" opacity="0.7"/></g><path d="M2 64 L28 43 L42 58" fill="none" stroke="#e8f4ff" stroke-width="1.8"/><path d="M72 11 L40 60 L41 94 L73 94Z" fill="#1d72b8"/><g clip-path="url(#lfc)"><path d="M30 30.0 L80 6.5" stroke="#d2e9f7" stroke-width="1.9"/><path d="M30 34.6 L80 11.1" stroke="#d2e9f7" stroke-width="1.9"/><path d="M30 39.2 L80 15.7" stroke="#d2e9f7" stroke-width="1.9"/><path d="M30 43.8 L80 20.3" stroke="#d2e9f7" stroke-width="1.9"/><path d="M30 48.4 L80 24.9" stroke="#d2e9f7" stroke-width="1.9"/><path d="M30 53.0 L80 29.5" stroke="#d2e9f7" stroke-width="1.9"/><path d="M30 57.6 L80 34.1" stroke="#d2e9f7" stroke-width="1.9"/><path d="M30 62.2 L80 38.7" stroke="#d2e9f7" stroke-width="1.9"/><path d="M30 66.8 L80 43.3" stroke="#d2e9f7" stroke-width="1.9"/><path d="M30 71.4 L80 47.9" stroke="#d2e9f7" stroke-width="1.9"/><path d="M30 76.0 L80 52.5" stroke="#d2e9f7" stroke-width="1.9"/><path d="M30 80.6 L80 57.1" stroke="#d2e9f7" stroke-width="1.9"/><path d="M30 85.2 L80 61.7" stroke="#d2e9f7" stroke-width="1.9"/><path d="M30 89.8 L80 66.3" stroke="#d2e9f7" stroke-width="1.9"/><path d="M30 94.4 L80 70.9" stroke="#d2e9f7" stroke-width="1.9"/><path d="M30 99.0 L80 75.5" stroke="#d2e9f7" stroke-width="1.9"/><path d="M30 103.6 L80 80.1" stroke="#d2e9f7" stroke-width="1.9"/><path d="M30 108.2 L80 84.7" stroke="#d2e9f7" stroke-width="1.9"/><path d="M30 112.8 L80 89.3" stroke="#d2e9f7" stroke-width="1.9"/><path d="M30 117.4 L80 93.9" stroke="#d2e9f7" stroke-width="1.9"/><path d="M30 122.0 L80 98.5" stroke="#d2e9f7" stroke-width="1.9"/><path d="M30 126.6 L80 103.1" stroke="#d2e9f7" stroke-width="1.9"/></g><path d="M72 11 L88 9 L140 42 L140 94 L73 94Z" fill="url(#rf)"/><g clip-path="url(#rfc)"><path d="M68 36 L150 -2" stroke="#86d3ea" stroke-width="0.7" opacity="0.55"/><path d="M68 42 L150 4" stroke="#86d3ea" stroke-width="0.7" opacity="0.55"/><path d="M68 48 L150 10" stroke="#86d3ea" stroke-width="0.7" opacity="0.55"/><path d="M68 54 L150 16" stroke="#86d3ea" stroke-width="0.7" opacity="0.55"/><path d="M68 60 L150 22" stroke="#86d3ea" stroke-width="0.7" opacity="0.55"/><path d="M68 66 L150 28" stroke="#86d3ea" stroke-width="0.7" opacity="0.55"/><path d="M68 72 L150 34" stroke="#86d3ea" stroke-width="0.7" opacity="0.55"/><path d="M68 78 L150 40" stroke="#86d3ea" stroke-width="0.7" opacity="0.55"/><path d="M68 84 L150 46" stroke="#86d3ea" stroke-width="0.7" opacity="0.55"/><path d="M68 90 L150 52" stroke="#86d3ea" stroke-width="0.7" opacity="0.55"/><path d="M68 96 L150 58" stroke="#86d3ea" stroke-width="0.7" opacity="0.55"/><path d="M68 102 L150 64" stroke="#86d3ea" stroke-width="0.7" opacity="0.55"/><path d="M68 108 L150 70" stroke="#86d3ea" stroke-width="0.7" opacity="0.55"/><path d="M68 114 L150 76" stroke="#86d3ea" stroke-width="0.7" opacity="0.55"/><path d="M68 120 L150 82" stroke="#86d3ea" stroke-width="0.7" opacity="0.55"/><path d="M68 126 L150 88" stroke="#86d3ea" stroke-width="0.7" opacity="0.55"/><path d="M68 132 L150 94" stroke="#86d3ea" stroke-width="0.7" opacity="0.55"/><path d="M68 138 L150 100" stroke="#86d3ea" stroke-width="0.7" opacity="0.55"/><path d="M68 144 L150 106" stroke="#86d3ea" stroke-width="0.7" opacity="0.55"/><path d="M68 150 L150 112" stroke="#86d3ea" stroke-width="0.7" opacity="0.55"/><path d="M68 156 L150 118" stroke="#86d3ea" stroke-width="0.7" opacity="0.55"/><path d="M74 12 L80 94" stroke="#062f52" stroke-width="5" opacity="0.5"/><path d="M88 10 L112 94" stroke="#0b3a60" stroke-width="3" opacity="0.45"/></g></g></svg>
<div style="position:absolute;left:592px;top:688px;width:22px;height:1px;background:#3565c0"></div>
<div style="position:absolute;left:592px;top:690px;width:22px;height:1px;background:#3565c0"></div>
<div style="position:absolute;left:592px;top:714px;width:22px;height:1px;background:#3565c0"></div>
<div style="position:absolute;left:592px;top:716px;width:22px;height:1px;background:#3565c0"></div>
<div style="position:absolute;left:592px;top:788px;width:22px;height:1px;background:#3565c0"></div>
<div style="position:absolute;left:592px;top:790px;width:22px;height:1px;background:#3565c0"></div>
<div style="position:absolute;left:592px;top:856px;width:22px;height:1px;background:#3565c0"></div>
<div style="position:absolute;left:592px;top:858px;width:22px;height:1px;background:#3565c0"></div>
<div style="position:absolute;left:595px;top:822px;width:41px;height:1px;background:#3565c0"></div>
<div style="position:absolute;left:595px;top:824px;width:41px;height:1px;background:#3565c0"></div>
<svg style="position:absolute;left:589px;top:756px;" width="35" height="3" viewBox="0 0 35 3"><path d="M0 2.6 L2.0 0.4 L4.0 2.6 L6.0 0.4 L8.0 2.6 L10.0 0.4 L12.0 2.6 L14.0 0.4 L16.0 2.6 L18.0 0.4 L20.0 2.6 L22.0 0.4 L24.0 2.6 L26.0 0.4 L28.0 2.6 L30.0 0.4 L32.0 2.6" fill="none" stroke="#d83030" stroke-width="1.1"/></svg>
<svg style="position:absolute;left:637px;top:857px;" width="41" height="3" viewBox="0 0 41 3"><path d="M0 2.6 L2.0 0.4 L4.0 2.6 L6.0 0.4 L8.0 2.6 L10.0 0.4 L12.0 2.6 L14.0 0.4 L16.0 2.6 L18.0 0.4 L20.0 2.6 L22.0 0.4 L24.0 2.6 L26.0 0.4 L28.0 2.6 L30.0 0.4 L32.0 2.6 L34.0 0.4 L36.0 2.6 L38.0 0.4 L40.0 2.6" fill="none" stroke="#d83030" stroke-width="1.1"/></svg>
<svg style="position:absolute;left:1005px;top:630px;" width="70" height="3" viewBox="0 0 70 3"><path d="M0 2.6 L2.0 0.4 L4.0 2.6 L6.0 0.4 L8.0 2.6 L10.0 0.4 L12.0 2.6 L14.0 0.4 L16.0 2.6 L18.0 0.4 L20.0 2.6 L22.0 0.4 L24.0 2.6 L26.0 0.4 L28.0 2.6 L30.0 0.4 L32.0 2.6 L34.0 0.4 L36.0 2.6 L38.0 0.4 L40.0 2.6 L42.0 0.4 L44.0 2.6 L46.0 0.4 L48.0 2.6 L50.0 0.4 L52.0 2.6 L54.0 0.4 L56.0 2.6 L58.0 0.4 L60.0 2.6 L62.0 0.4 L64.0 2.6 L66.0 0.4 L68.0 2.6" fill="none" stroke="#d83030" stroke-width="1.1"/></svg>
<div style="position:absolute;left:1161px;top:655px;width:82px;height:1px;background:#000"></div>
<div style="position:absolute;left:1161px;top:656px;width:82px;height:1px;background:#3565c0"></div>
<div style="position:absolute;left:1161px;top:658px;width:82px;height:1px;background:#3565c0"></div>
<div style="position:absolute;left:747px;top:921px;width:94px;height:1px;background:#3565c0"></div>
<div style="position:absolute;left:747px;top:923px;width:94px;height:1px;background:#3565c0"></div>
<div style="position:absolute;left:542px;top:993px;width:31px;height:1px;background:#3565c0"></div>
<div style="position:absolute;left:542px;top:995px;width:31px;height:1px;background:#3565c0"></div>
<svg style="position:absolute;left:186px;top:1004px;" width="28" height="26" viewBox="0 0 28 26"><g fill="none" stroke="#333" stroke-width="1.3" stroke-linejoin="round"><path d="M13.4 11.8V5.8C13.4 5.8 12.5 5.3 10.5 5.3H5.6V20H13.4V16"/><path d="M13.4 11.8V5.8C14 5.4 15 5.3 16 5.3H21V11.8"/></g><path d="M14.2 13.2L22.5 21.5M22.5 13.2L14.2 21.5" stroke="#333" stroke-width="1.2"/></svg>
<svg style="position:absolute;left:520px;top:1004px;" width="26" height="26" viewBox="0 0 26 26"><g fill="none" stroke="#333" stroke-width="1.3"><path d="M9.5 20H4.7V5.8H21.5V10.5"/><path d="M4.7 8.3H21.5"/><circle cx="16" cy="16" r="5"/></g><circle cx="16" cy="16" r="2.3" fill="#333"/><rect x="7" y="10.5" width="3" height="1" fill="#333"/><rect x="7" y="13.3" width="1.5" height="1" fill="#333"/><rect x="7" y="15.6" width="1.5" height="1" fill="#333"/></svg>
<svg style="position:absolute;left:562px;top:1006px;" width="22" height="22" viewBox="0 0 22 22"><g fill="none" stroke="#333" stroke-width="1.3" stroke-linecap="round" stroke-linejoin="round"><circle cx="11.5" cy="3.2" r="1.8"/><path d="M9.8 5C7 5 3.5 4 2.8 5.5C2.2 7 4.5 8 6.8 8.6C6.8 12 6 14 5.8 16.5C5.6 18.5 7 19 8 18"/><path d="M13.2 5C16 5 19.5 4 20 5.5C20.5 7 18 8 16.2 8.6V11.2"/><path d="M13 15.2L16 18.2L22 12.2"/></g></svg>
<svg style="position:absolute;left:1474px;top:1004px;" width="26" height="26" viewBox="0 0 26 26"><g fill="none" stroke="#444" stroke-width="1.4"><path d="M5.5 7.5V4.8H8.5M19.5 4.8H22.5V7.5M5.5 18.5V21.3H8.5M19.5 21.3H22.5V18.5"/></g><path d="M9.6 7.5H15.5L18.6 10.6V18.6H9.6Z" fill="#fff" stroke="#222" stroke-width="1.2" stroke-linejoin="round"/><path d="M15.2 7.6V10.9H18.5" fill="none" stroke="#222" stroke-width="1.1"/></svg>
<svg style="position:absolute;left:1564px;top:1008px;" width="18" height="17" viewBox="0 0 18 17"><g fill="none" stroke="#333" stroke-width="1.2" stroke-linejoin="round"><path d="M8.8 2.5C7 1 3 0.8 0.8 1V15.2H7C8 15.2 8.6 15.6 8.8 16.2C9 15.6 9.6 15.2 10.6 15.2H16.6V1C14.5 0.8 10.5 1 8.8 2.5Z"/><path d="M8.8 2.5V16"/></g><g stroke="#555" stroke-width="1"><path d="M2.8 4.5h4M2.8 7h4M2.8 9.5h4M2.8 12h4M10.6 4.5h4M10.6 7h4M10.6 9.5h4M10.6 12h4"/></g></svg>
<svg style="position:absolute;left:1615px;top:1008px;" width="15" height="18" viewBox="0 0 15 18"><rect x="0.8" y="0.8" width="12.5" height="16.2" fill="#fff" stroke="#333" stroke-width="1.3"/><g stroke="#444" stroke-width="1"><path d="M3 4h8M3 6.5h8M3 9h8M3 11.5h8M3 14h8"/></g></svg>
<svg style="position:absolute;left:1664px;top:1008px;" width="19" height="18" viewBox="0 0 19 18"><path d="M8 16.5H0.8V0.8H16.3V6" fill="#fff" stroke="#333" stroke-width="1.3"/><g stroke="#444" stroke-width="1"><path d="M3 3.5h10.5M3 6h8M3 8.5h3M3 11h3M3 13.5h3"/></g><circle cx="12.6" cy="12.6" r="5.2" fill="#333"/><g fill="none" stroke="#e6e6e6" stroke-width="0.8"><ellipse cx="12.6" cy="12.6" rx="2.2" ry="4.6"/><path d="M8 11h9.2M8 14.2h9.2"/></g></svg>
<div style="position:absolute;left:1704px;top:1016px;width:10px;height:1px;background:#333"></div>
<div style="position:absolute;left:1721px;top:1017px;width:125px;height:1px;background:#6a6a6a"></div>
<div style="position:absolute;left:1781px;top:1010px;width:6px;height:14px;background:#6e6e6e;border-radius:1px"></div>
<div style="position:absolute;left:1852px;top:1016px;width:10px;height:1px;background:#333"></div>
<div style="position:absolute;left:1856px;top:1012px;width:1px;height:9px;background:#333"></div>
</body></html>
